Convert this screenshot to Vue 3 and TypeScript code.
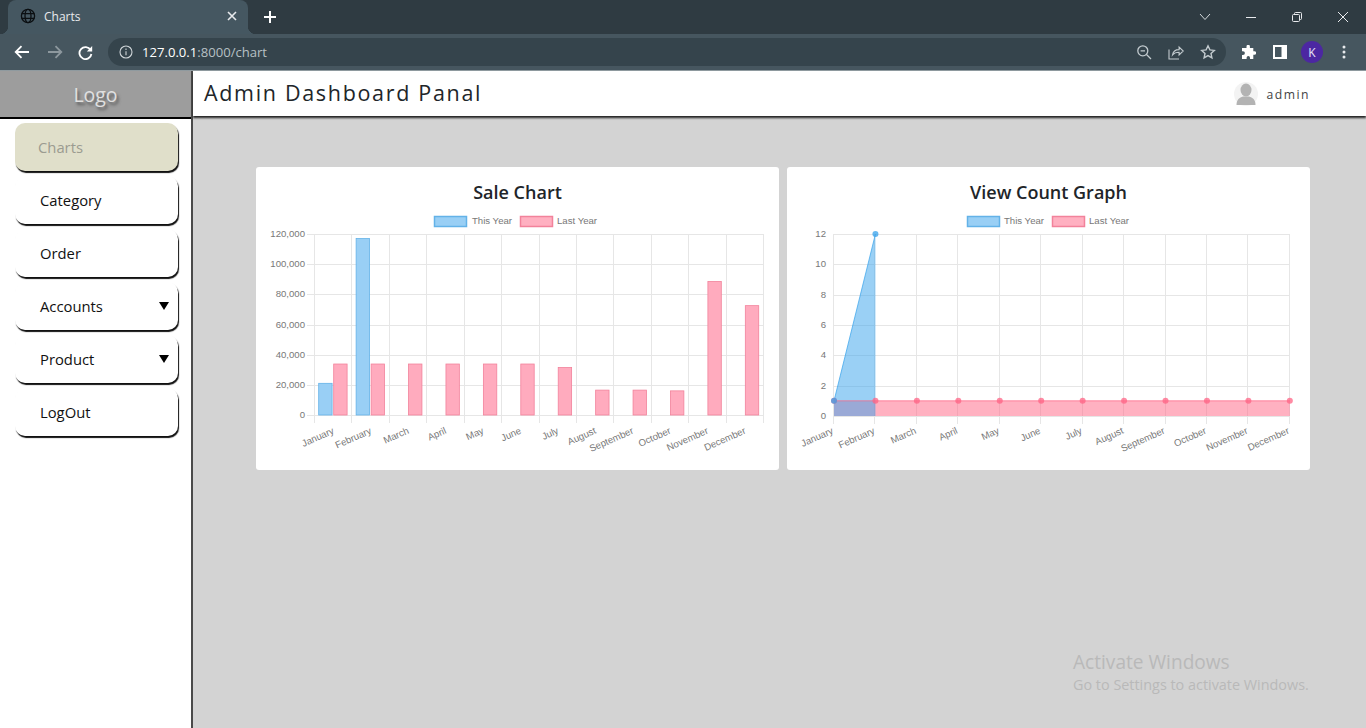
<script setup lang="ts">
interface Bar {
	x: number;
	y: number;
	h: number;
	w: number;
}

const months = [
	"January",
	"February",
	"March",
	"April",
	"May",
	"June",
	"July",
	"August",
	"September",
	"October",
	"November",
	"December",
];

const menu = [
	{ label: "Charts", active: true, caret: false },
	{ label: "Category", active: false, caret: false },
	{ label: "Order", active: false, caret: false },
	{ label: "Accounts", active: false, caret: true },
	{ label: "Product", active: false, caret: true },
	{ label: "LogOut", active: false, caret: false },
];

// sale chart, pixels inside its svg
const saleLeft = 59;
const saleStep = 37.42;
const saleTop = 24;
const saleBottom = 205;
const saleMax = 120000;
const saleThis = [21000, 117000];
const saleLast = [33800, 33800, 33800, 33800, 33800, 33800, 31500, 16500, 16500, 16000, 88500, 72500];

const saleTicks = [120000, 100000, 80000, 60000, 40000, 20000, 0].map((v) => ({
	label: v.toLocaleString("en-US"),
	y: Math.round(saleBottom - (v / saleMax) * (saleBottom - saleTop)) + 0.5,
}));

const saleGrid = Array.from({ length: 13 }, (_, i) => Math.round(saleLeft + i * saleStep) - 0.5);

const toBar = (v: number, i: number, offset: number): Bar => {
	const h = (v / saleMax) * (saleBottom - saleTop);
	return { x: saleLeft + i * saleStep + offset, y: saleBottom - h, h, w: 13.4 };
};
const saleBlue = saleThis.map((v, i) => toBar(v, i, 3.7));
const salePink = saleLast.map((v, i) => toBar(v, i, 18.7));

const saleLabels = months.map((m, i) => ({
	text: m,
	x: saleLeft + (i + 0.5) * saleStep + 1,
	y: 223,
}));

// view count graph
const viewLeft = 47;
const viewStep = 41.44;
const viewTop = 24;
const viewBottom = 206;
const viewMax = 12;
const viewThis = [1, 12];
const viewLast = months.map(() => 1);

const viewX = (i: number) => viewLeft + i * viewStep;
const viewY = (v: number) => viewBottom - (v / viewMax) * (viewBottom - viewTop);

const viewTicks = [12, 10, 8, 6, 4, 2, 0].map((v) => ({
	label: String(v),
	y: Math.round(viewY(v)) + 0.5,
}));
const viewGrid = months.map((_, i) => Math.round(viewX(i)) - 0.5);

const areaOf = (vals: number[]) => {
	const line = vals.map((v, i) => `${viewX(i)},${viewY(v)}`).join(" ");
	return `${line} ${viewX(vals.length - 1)},${viewBottom} ${viewX(0)},${viewBottom}`;
};
const lineOf = (vals: number[]) => vals.map((v, i) => `${viewX(i)},${viewY(v)}`).join(" ");

const viewLabels = months.map((m, i) => ({ text: m, x: viewX(i), y: 223 }));
</script>

<template>
	<div class="app">
		<!-- browser frame -->
		<div class="tabstrip">
			<div class="tab">
				<svg class="globe" width="16" height="16" viewBox="0 0 16 16" fill="none" stroke="#0b0f12" stroke-width="1.3">
					<circle cx="8" cy="8" r="6.6" />
					<ellipse cx="8" cy="8" rx="3" ry="6.6" />
					<path d="M1.6 5.7h12.8M1.6 10.3h12.8" />
				</svg>
				<span class="tab-title">Charts</span>
				<svg class="tab-close" width="10" height="10" viewBox="0 0 10 10" stroke="#e8eaed" stroke-width="1.6">
					<path d="M1 1l8 8M9 1l-8 8" />
				</svg>
			</div>
			<svg class="new-tab" width="14" height="14" viewBox="0 0 14 14" stroke="#fff" stroke-width="2">
				<path d="M7 1v12M1 7h12" />
			</svg>
			<div class="win-controls">
				<span class="win-btn">
					<svg width="12" height="8" viewBox="0 0 12 8" fill="none" stroke="#d5dadd" stroke-width="1">
						<path d="M1 1l5 5.5L11 1" />
					</svg>
				</span>
				<span class="win-btn">
					<svg width="12" height="12" viewBox="0 0 12 12" fill="none" stroke="#e8eaed" stroke-width="1">
						<path d="M1 6.5h10" />
					</svg>
				</span>
				<span class="win-btn">
					<svg width="12" height="12" viewBox="0 0 12 12" fill="none" stroke="#e8eaed" stroke-width="1">
						<rect x="1.5" y="3.5" width="7" height="7" rx="1" />
						<path d="M3.5 3.5V2.5a1 1 0 0 1 1-1h5a1 1 0 0 1 1 1v5a1 1 0 0 1-1 1h-1" />
					</svg>
				</span>
				<span class="win-btn">
					<svg width="12" height="12" viewBox="0 0 12 12" fill="none" stroke="#e8eaed" stroke-width="1">
						<path d="M1 1l10 10M11 1L1 11" />
					</svg>
				</span>
			</div>
		</div>
		<div class="toolbar">
			<svg class="tool-back" width="16" height="14" viewBox="0 0 16 14" fill="none" stroke="#fff" stroke-width="1.8">
				<path d="M15 7H2M7.5 1.2L1.7 7l5.8 5.8" />
			</svg>
			<svg class="tool-forward" width="16" height="14" viewBox="0 0 16 14" fill="none" stroke="#8d989e" stroke-width="1.8">
				<path d="M1 7h13M8.5 1.2L14.3 7l-5.8 5.8" />
			</svg>
			<svg class="tool-reload" width="15" height="15" viewBox="0 0 15 15" fill="none">
				<path d="M12.6 5A6 6 0 1 0 13.4 9" stroke="#fff" stroke-width="1.8" />
				<path d="M14.2 1v5.4H8.8z" fill="#fff" />
			</svg>
			<div class="address">
				<svg width="14" height="14" viewBox="0 0 14 14" fill="none" stroke="#cfd5d8" stroke-width="1.1">
					<circle cx="7" cy="7" r="6" />
					<path d="M7 6.2v4M7 3.6v1.3" />
				</svg>
				<span class="url"><b>127.0.0.1</b>:8000/chart</span>
				<div class="address-icons">
					<svg width="16" height="16" viewBox="0 0 16 16" fill="none" stroke="#c3cbcf" stroke-width="1.3">
						<circle cx="6.8" cy="6.8" r="5" />
						<path d="M4.6 6.8h4.4M10.5 10.5l4.5 4.5" />
					</svg>
					<svg width="16" height="16" viewBox="0 0 16 16" fill="none" stroke="#c3cbcf" stroke-width="1.1">
						<path d="M1 5.5v9.5h10" />
						<path d="M4.5 11c.6-3.6 3.2-5.4 6.6-5.4V3l4.2 4-4.2 4V8.3c-2.8 0-5 .7-6.6 2.7z" />
					</svg>
					<svg width="16" height="16" viewBox="0 0 16 16" fill="none" stroke="#c3cbcf" stroke-width="1.4">
						<path d="M8 1.8l1.9 4.1 4.4.5-3.3 3 .9 4.4L8 11.6l-3.9 2.2.9-4.4-3.3-3 4.4-.5z" />
					</svg>
				</div>
			</div>
			<div class="tool-right">
				<span class="tool-cell">
					<svg width="15" height="15" viewBox="0 0 15 15" fill="#fff">
						<path d="M5.5 1.5a1.7 1.7 0 0 1 3.4 0V3h3.4v3.3h1.2a1.7 1.7 0 0 1 0 3.4h-1.2V14H9v-1.3a1.7 1.7 0 0 0-3.4 0V14H1v-4h1a1.9 1.9 0 0 0 0-3.8H1V3h4.5z" />
					</svg>
				</span>
				<span class="tool-cell">
					<svg width="14" height="14" viewBox="0 0 14 14">
						<rect width="14" height="14" fill="#fff" />
						<rect x="2" y="2" width="6.5" height="10" fill="#46565f" />
					</svg>
				</span>
				<span class="tool-cell"><span class="profile">K</span></span>
				<span class="tool-cell">
					<svg width="4" height="14" viewBox="0 0 4 14" fill="#e8eaed">
						<circle cx="2" cy="2" r="1.5" />
						<circle cx="2" cy="7" r="1.5" />
						<circle cx="2" cy="12" r="1.5" />
					</svg>
				</span>
			</div>
		</div>

		<!-- page -->
		<div class="page">
			<aside class="sidebar">
				<div class="logo">Logo</div>
				<nav class="menu">
					<a
						v-for="item in menu"
						:key="item.label"
						class="menu-item"
						:class="{ active: item.active }"
					>
						{{ item.label }}
						<span v-if="item.caret" class="caret"></span>
					</a>
				</nav>
			</aside>

			<div class="content">
				<header class="topbar">
					<h1>Admin Dashboard Panal</h1>
					<div class="user">
						<svg width="24" height="24" viewBox="0 0 24 24">
							<circle cx="12" cy="12" r="12" fill="#f3f3f3" />
							<ellipse cx="12" cy="8" rx="5.5" ry="6.5" fill="#b3b3b3" />
							<path d="M2.5 23c0-5.5 3-7.5 6.5-8.500h6c3.500 1 6.500 3 6.500 8.500z" fill="#b3b3b3" />
						</svg>
						<span>admin</span>
					</div>
				</header>

				<main class="charts">
					<section class="card">
						<h3>Sale Chart</h3>
						<svg class="plot" width="522" height="252">
							<g class="legend">
								<rect x="178.5" y="6.5" width="32" height="10" class="blue-box" />
								<text x="216" y="13.5">This Year</text>
								<rect x="264.5" y="6.5" width="32" height="10" class="pink-box" />
								<text x="301" y="13.5">Last Year</text>
							</g>
							<line v-for="x in saleGrid" :key="x" :x1="x" :x2="x" :y1="saleTop" :y2="saleBottom + 8" class="grid" />
							<g v-for="t in saleTicks" :key="t.label">
								<line :x1="saleLeft - 8" x2="508" :y1="t.y" :y2="t.y" class="grid" />
								<text :x="saleLeft - 10" :y="t.y + 2.5" class="tick" text-anchor="end">{{ t.label }}</text>
							</g>
							<rect v-for="(b, i) in saleBlue" :key="'b' + i" :x="b.x" :y="b.y" :width="b.w" :height="b.h" class="bar-blue" />
							<rect v-for="(b, i) in salePink" :key="'p' + i" :x="b.x" :y="b.y" :width="b.w" :height="b.h" class="bar-pink" />
							<text
								v-for="l in saleLabels"
								:key="l.text"
								class="tick month"
								text-anchor="end"
								:transform="`translate(${l.x} ${l.y}) rotate(-24)`"
							>{{ l.text }}</text>
						</svg>
					</section>

					<section class="card">
						<h3>View Count Graph</h3>
						<svg class="plot" width="523" height="252">
							<g class="legend">
								<rect x="180.5" y="6.5" width="32" height="10" class="blue-box" />
								<text x="217" y="13.5">This Year</text>
								<rect x="265.5" y="6.5" width="32" height="10" class="pink-box" />
								<text x="302" y="13.5">Last Year</text>
							</g>
							<line v-for="x in viewGrid" :key="x" :x1="x" :x2="x" :y1="viewTop" :y2="viewBottom + 8" class="grid" />
							<g v-for="t in viewTicks" :key="t.label">
								<line :x1="viewLeft" x2="503" :y1="t.y" :y2="t.y" class="grid" />
								<text :x="viewLeft - 8" :y="t.y + 2.5" class="tick" text-anchor="end">{{ t.label }}</text>
							</g>
							<polygon :points="areaOf(viewLast)" class="area-pink" />
							<polygon :points="areaOf(viewThis)" class="area-blue" />
							<polyline :points="lineOf(viewLast)" class="line-pink" />
							<polyline :points="lineOf(viewThis)" class="line-blue" />
							<circle v-for="(v, i) in viewLast" :key="'vp' + i" :cx="viewX(i)" :cy="viewY(v)" r="3" class="dot-pink" />
							<circle v-for="(v, i) in viewThis" :key="'vb' + i" :cx="viewX(i)" :cy="viewY(v)" r="3" class="dot-blue" />
							<text
								v-for="l in viewLabels"
								:key="l.text"
								class="tick month"
								text-anchor="end"
								:transform="`translate(${l.x} ${l.y}) rotate(-24)`"
							>{{ l.text }}</text>
						</svg>
					</section>
				</main>
			</div>
		</div>

		<div class="activate">
			<div class="activate-title">Activate Windows</div>
			<div class="activate-sub">Go to Settings to activate Windows.</div>
		</div>
	</div>
</template>

<style>
html,
body {
	margin: 0;
	overflow: hidden;
}
</style>

<style scoped>
.app {
	position: relative;
	height: 728px;
	display: flex;
	flex-direction: column;
	font-family: "Open Sans", "Noto Sans", sans-serif;
	overflow: hidden;
}

.tabstrip {
	height: 34px;
	background: #2f3b42;
	display: flex;
	align-items: center;
	padding-left: 8px;
}

.tab {
	position: relative;
	width: 240px;
	height: 34px;
	box-sizing: border-box;
	background: #455761;
	border-radius: 8px 8px 0 0;
	display: flex;
	align-items: center;
	padding: 0 11px 2px 12px;
}

.tab::before,
.tab::after {
	content: "";
	position: absolute;
	bottom: 0;
	width: 8px;
	height: 8px;
}

.tab::before {
	left: -8px;
	background: radial-gradient(circle at 0 0, transparent 8px, #455761 8.5px);
}

.tab::after {
	right: -8px;
	background: radial-gradient(circle at 100% 0, transparent 8px, #455761 8.5px);
}

.tab-title {
	margin-left: 8px;
	flex: 1;
	font-size: 12px;
	color: #e8eaed;
}

.new-tab {
	margin-left: 15px;
}

.win-controls {
	margin-left: auto;
	display: flex;
	align-items: center;
	height: 28px;
}

.win-btn {
	width: 46px;
	display: flex;
	align-items: center;
	justify-content: center;
}

.toolbar {
	height: 36px;
	background: #46565f;
	display: flex;
	align-items: center;
	border-bottom: 1px solid #8f9a9f;
}

.tool-back {
	margin-left: 14px;
}

.tool-forward {
	margin-left: 17px;
}

.tool-reload {
	margin-left: 15px;
}

.address {
	margin-left: 15px;
	width: 1118px;
	height: 28px;
	box-sizing: border-box;
	background: #35444c;
	border-radius: 14px;
	display: flex;
	align-items: center;
	padding: 0 10px 0 11px;
}

.url {
	margin-left: 9px;
	font-size: 13.1px;
	color: #b7c0c4;
}

.url b {
	font-weight: 400;
	color: #fff;
}

.address-icons {
	margin-left: auto;
	display: flex;
	gap: 16px;
}

.tool-right {
	display: flex;
	align-items: center;
	padding-left: 6px;
}

.tool-cell {
	width: 32px;
	display: flex;
	align-items: center;
	justify-content: center;
}

.profile {
	width: 22px;
	height: 22px;
	border-radius: 50%;
	background: #4c27a2;
	color: #e8e4f5;
	font-size: 12px;
	display: flex;
	align-items: center;
	justify-content: center;
}

.page {
	flex: 1;
	display: flex;
	min-height: 0;
}

.sidebar {
	width: 191px;
	flex: none;
	background: #fff;
	border-right: 2px solid #4a4a4a;
}

.logo {
	height: 46px;
	background: #9d9d9d;
	border-bottom: 2px solid #000;
	display: flex;
	align-items: center;
	justify-content: center;
	font-size: 19.5px;
	font-weight: 500;
	color: #e0e0e0;
	text-shadow: 2px 3px 3px #555;
}

.menu {
	padding: 4px 13px 0 15px;
	display: flex;
	flex-direction: column;
	gap: 5px;
}

.menu-item {
	height: 48px;
	box-sizing: border-box;
	border-radius: 10px;
	padding-left: 25px;
	display: flex;
	align-items: center;
	justify-content: space-between;
	font-size: 14.8px;
	color: #111;
	box-shadow: 1px 2px 1px #111;
	background: #fff;
}

.menu-item.active {
	background: #e0dfca;
	color: #9b9b90;
	padding-left: 23px;
	font-weight: 500;
}

.caret {
	width: 0;
	height: 0;
	border-left: 5.5px solid transparent;
	border-right: 5.5px solid transparent;
	border-top: 8px solid #000;
	margin-right: 9px;
}

.content {
	flex: 1;
	min-width: 0;
	display: flex;
	flex-direction: column;
	background: #d3d3d3;
}

.topbar {
	position: relative;
	height: 45px;
	background: #fff;
	box-shadow: 0 2px 2px #222;
	display: flex;
	align-items: center;
	justify-content: space-between;
	padding: 0 56px 2px 11px;
	box-sizing: border-box;
}

.topbar h1 {
	margin: 0;
	font-size: 21.5px;
	font-weight: 400;
	letter-spacing: 1.68px;
	color: #212529;
}

.user {
	display: flex;
	align-items: center;
	gap: 8px;
	margin-top: 3px;
	font-size: 12.2px;
	letter-spacing: 1.5px;
	color: #444;
}

.charts {
	padding: 51px 56px 0 63px;
	display: grid;
	grid-template-columns: 1fr 1fr;
	gap: 8px;
	align-items: start;
}

.card {
	background: #fff;
	border-radius: 3px;
	height: 303px;
	overflow: hidden;
}

.card h3 {
	margin: 0;
	height: 43px;
	padding-top: 12px;
	box-sizing: border-box;
	text-align: center;
	font-size: 18px;
	line-height: 26px;
	font-weight: 600;
	color: #212529;
}

.plot {
	display: block;
}

.plot text {
	font-family: "Liberation Sans", Arial, sans-serif;
}

.legend text {
	font-size: 9.6px;
	fill: #777;
}

.blue-box {
	fill: #99cff5;
	stroke: #63b2e8;
	stroke-width: 1.5;
}

.pink-box {
	fill: #ffb0c1;
	stroke: #f2829b;
	stroke-width: 1.5;
}

.grid {
	stroke: #e6e6e6;
	stroke-width: 1;
}

.tick {
	font-size: 9.6px;
	fill: #777;
}

.bar-blue {
	fill: #99cff5;
	stroke: #63b2e8;
	stroke-width: 0.8;
}

.bar-pink {
	fill: #ffabbe;
	stroke: #f2829b;
	stroke-width: 0.8;
}

.area-blue {
	fill: rgba(54, 162, 235, 0.5);
}

.area-pink {
	fill: rgba(255, 99, 132, 0.5);
}

.line-blue {
	fill: none;
	stroke: rgba(54, 162, 235, 0.7);
	stroke-width: 1;
}

.line-pink {
	fill: none;
	stroke: rgba(255, 99, 132, 0.7);
	stroke-width: 1;
}

.dot-blue {
	fill: rgba(54, 162, 235, 0.75);
}

.dot-pink {
	fill: rgba(255, 99, 132, 0.75);
}

.activate {
	position: absolute;
	left: 1073px;
	top: 649px;
	color: #b9b9b9;
	pointer-events: none;
}

.activate-title {
	font-size: 19.1px;
	line-height: 26px;
}

.activate-sub {
	font-size: 14.4px;
	line-height: 20px;
}
</style>
